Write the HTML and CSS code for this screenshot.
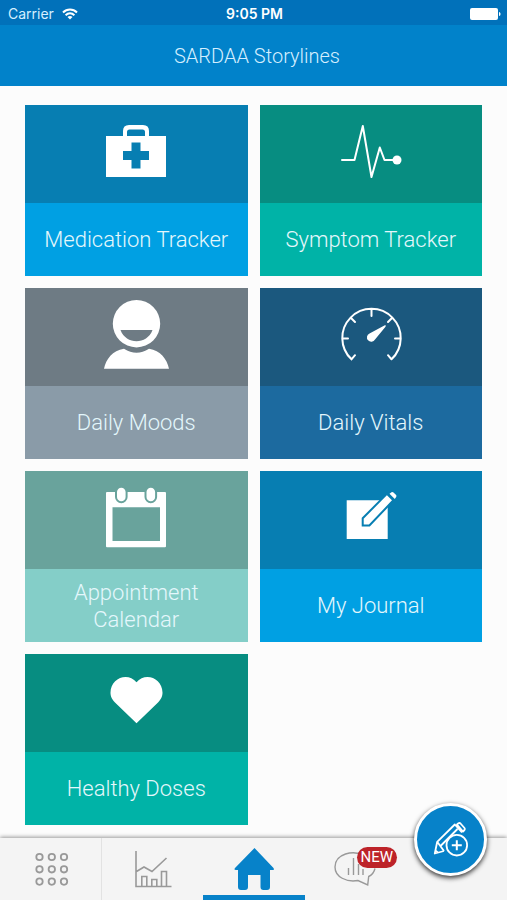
FILE: index.html
```html
<!DOCTYPE html>
<html lang="en">
<head>
<meta charset="utf-8">
<meta name="viewport" content="width=device-width, initial-scale=1">
<title>SARDAA Storylines</title>
<link rel="stylesheet" href="styles.css">
</head>
<body>
<div class="status">
  <div class="carrier"><span>Carrier</span>
    <svg width="16" height="12" viewBox="0 0 16 12" fill="none" stroke="#fff" stroke-width="2"><path d="M1 4.500C5 .5 11 .5 15 4.500M3.600 7.200c2.600-2.500 6.200-2.500 8.800 0"/><path d="M8 11.500 5.500 9c1.400-1.300 3.600-1.300 5 0z" fill="#fff" stroke="none"/></svg>
  </div>
  <span class="time">9:05 PM</span>
  <svg class="battery" width="31" height="12" viewBox="0 0 31 12" fill="#fff"><rect width="28" height="12" rx="2"/><path d="M29 4c2 0 2 4 0 4z"/></svg>
</div>
<header class="header"><h1>SARDAA Storylines</h1></header>
<main class="tiles">
  <a class="tile blue" href="#medication">
    <svg class="icon" viewBox="0 0 80 98"><path class="w" d="M10 31h17v-5q0-6 6-6h14q6 0 6 6v5h17v41H10zM31 31h18v-4q0-2.500-2.500-2.500h-13Q31 24.500 31 27zM35.500 37.500V46H27v9h8.500v8.500h9V55H53v-9h-8.500v-8.500z" fill-rule="evenodd"/></svg>
    <span class="label">Medication Tracker</span>
  </a>
  <a class="tile green" href="#symptoms">
    <svg class="icon" viewBox="0 0 80 98"><path class="l" d="M11 55h12.500l8.300-34L40.500 72l8.300-29.500L53.500 55h11" stroke-linejoin="round"/><circle class="w" cx="66" cy="55" r="4.500"/></svg>
    <span class="label">Symptom Tracker</span>
  </a>
  <a class="tile gray" href="#moods">
    <svg class="icon" viewBox="0 0 80 98"><path class="w" fill-rule="evenodd" d="M40.500 12a23.700 23.700 0 1 0 0 47.400a23.700 23.700 0 1 0 0-47.400zM24.500 42h32c-5.500 15-26.500 15-32 0z"/><path class="w" d="M28 60.700q12.500 8 25 0C64.500 62.500 71 71 73 80.700H8C10 71 16.500 62.500 28 60.700z"/></svg>
    <span class="label">Daily Moods</span>
  </a>
  <a class="tile navy" href="#vitals">
    <svg class="icon" viewBox="0 0 80 98"><path class="l" d="M24 67.200 20.500 71.300a29.200 29.200 0 1 1 40 0M57 67.200l3.500 4.100M40.500 21.500V28M11.500 50.500H17M69.500 50.500H64M20 30l4 4M61 30l-4 4"/><path class="w" d="M54.300 37q1 .8 0 2L44 51.500a4.300 4.300 0 1 1-5.500-6z"/></svg>
    <span class="label">Daily Vitals</span>
  </a>
  <a class="tile sage" href="#appointments">
    <svg class="icon" viewBox="0 0 80 98"><path class="w" fill-rule="evenodd" d="M11 21h58q1 0 1 1v53.300q0 1-1 1H11q-1 0-1-1V22q0-1 1-1zM16.500 36.300V70H64V36.300z"/><g class="w cut"><rect x="20" y="15.700" width="10.600" height="15.500" rx="5.300"/><rect x="49.500" y="15.700" width="10.600" height="15.500" rx="5.300"/></g></svg>
    <span class="label">Appointment Calendar</span>
  </a>
  <a class="tile blue" href="#journal">
    <svg class="icon" viewBox="0 0 80 98"><path class="w" d="M15.700 29.300h41v38.700h-41z"/><path class="w cut" d="M31.700 47.300 55.900 22.800l6.500 6.500-24 25.200h-6.700z"/><path class="w" d="m58.500 22.700 2-1.500q1-.7 2 .2l2.600 2.600q.8 1 0 2l-1.300 2z"/></svg>
    <span class="label">My Journal</span>
  </a>
  <a class="tile green" href="#doses">
    <svg class="icon" viewBox="0 0 80 98"><path class="w" d="M40.500 69.300 19 48.500C15 44.500 14.500 41 14.500 38.500c0-14 17-21 26-10.200 9-10.800 26-3.800 26 10.200 0 2.500-.5 6-4.500 10z"/></svg>
    <span class="label">Healthy Doses</span>
  </a>
</main>
<nav class="tabs" aria-label="Main">
  <a class="tab first" href="#menu" aria-label="Menu">
    <svg class="tabicon" viewBox="0 0 44 44" stroke-width="1.800"><circle cx="10.500" cy="10" r="3.200"/><circle cx="22.800" cy="10" r="3.200"/><circle cx="35" cy="10" r="3.200"/><circle cx="10.500" cy="22.300" r="3.200"/><circle cx="22.800" cy="22.300" r="3.200"/><circle cx="35" cy="22.300" r="3.200"/><circle cx="10.500" cy="34.600" r="3.200"/><circle cx="22.800" cy="34.600" r="3.200"/><circle cx="35" cy="34.600" r="3.200"/></svg>
  </a>
  <a class="tab" href="#charts" aria-label="Charts">
    <svg class="tabicon" viewBox="0 0 44 44" stroke-width="1.600"><path d="M5 4v35.500h35.500M5.500 24.500l7.500-4.500 8 4.500L35.500 11M10.800 39V29.500h5V39M20.800 39v-6.500h5V39M30.500 39V24.500h5V39"/></svg>
  </a>
  <a class="tab active" href="#home" aria-label="Home" aria-current="page">
    <svg class="tabicon" viewBox="0 0 44 44"><path d="m22.500 1 19 20q1.200 2-1 2h-2.500v17q0 3-3 3h-3.500q-3 0-3-3V28H16v12q0 3-3 3H9q-3 0-3-3V23H4q-2.500 0-1-2z" fill="#0782c9" stroke="none"/></svg>
  </a>
  <a class="tab" href="#insights" aria-label="Insights, new">
    <svg class="tabicon" viewBox="0 0 44 44" stroke-width="1.400"><path d="M32 9C20 2 2 7 2 20c0 10 11.500 15.500 23 13.500l9.700 4.500 1-8.500q5-2.500 6.300-8M15.500 28v-7M20.500 28V11M25.500 28V17M30 28v-6"/></svg>
    <span class="badge">NEW</span>
  </a>
  <span class="tab"></span>
</nav>
<button class="add" type="button" aria-label="Add entry">
  <svg width="38" height="38" viewBox="0 0 38 38" fill="none" stroke="#fff" stroke-width="1.800" stroke-linejoin="round"><path d="M12 30 2.800 32.500l2.400-11.700L22.800 3.500l7.200 8M5.200 20.800 12 30M9 24.500 25.500 8M25 3.500l1.500-1.200q1-.8 2 .2l4 4.500q.8 1 0 2L31 10.500zM3.500 29.500l2.500 2.200"/><circle cx="24.800" cy="24.200" r="10.300" fill="#0782c9"/><path d="M24.800 19.200v10M19.800 24.200h10" stroke-width="2"/></svg>
</button>
</body>
</html>
```
FILE: styles.css
```css
* { box-sizing: border-box; }
body {
  margin: 0;
  min-height: 100vh;
  display: flex;
  flex-direction: column;
  background: #fcfcfc;
  color: #fff;
  font-family: Roboto, "Liberation Sans", sans-serif;
}
a { color: inherit; text-decoration: none; }
.status {
  display: grid;
  grid-template-columns: 1fr auto 1fr;
  align-items: center;
  height: 25px;
  padding: 2px 6px 0 8px;
  background: #0171ba;
  font: 400 14px Inter, sans-serif;
}
.carrier { display: flex; align-items: center; gap: 8px; color: #d5efff; }
.time { font-weight: 600; }
.battery { justify-self: end; }
.header {
  display: flex;
  align-items: center;
  justify-content: center;
  height: 61px;
  padding-left: 7px;
  background: #0182ca;
}
h1 { margin: 0; font-size: 20px; font-weight: 300; color: #d5efff; }
.tiles {
  flex: 1;
  display: grid;
  grid-template-columns: 1fr 1fr;
  align-content: start;
  gap: 12px;
  padding: 19px 25px 13px;
}
.tile { display: flex; flex-direction: column; background: var(--top); }
.blue { --top: #077eb2; --bottom: #00a0e3; }
.green { --top: #078d81; --bottom: #00b3a7; }
.gray { --top: #6e7b84; --bottom: #8a9ba8; }
.navy { --top: #1b587e; --bottom: #1c6a9f; }
.sage { --top: #69a39c; --bottom: #84cec8; }
.icon { width: 80px; height: 98px; align-self: center; }
.w { fill: #fff; }
.l { fill: none; stroke: #fff; stroke-width: 2; stroke-linecap: round; }
.cut { stroke: var(--top); stroke-width: 2; }
.label {
  display: flex;
  align-items: center;
  justify-content: center;
  height: 73px;
  padding: 0 40px;
  background: var(--bottom);
  color: #e4f7fc;
  font-size: 22px;
  font-weight: 300;
  line-height: 27px;
  text-align: center;
}
.blue .label, .green .label { padding: 0 12px; }
.tabs {
  display: flex;
  height: 62px;
  background: #f4f4f4;
  box-shadow: 0 -1px 4px rgba(0, 0, 0, .4);
}
.tab {
  position: relative;
  flex: 1;
  display: flex;
  justify-content: center;
  padding-top: 9px;
}
.first { border-right: 1px solid #e2e2e2; }
.active { border-bottom: 5px solid #0782c9; }
.tabicon { width: 44px; height: 44px; fill: none; stroke: #999; }
.badge {
  position: absolute;
  top: 9px;
  left: 52px;
  padding: 0 4px;
  border-radius: 11px;
  background: #bd2329;
  font-size: 15px;
  font-weight: 400;
  line-height: 21px;
}
.add {
  position: fixed;
  right: 20px;
  bottom: 24px;
  display: flex;
  align-items: center;
  justify-content: center;
  width: 73px;
  height: 73px;
  padding: 0;
  border: 3px solid #fff;
  border-radius: 50%;
  background: #0782c9;
  box-shadow: 0 2px 5px rgba(0, 0, 0, .8);
}
```
